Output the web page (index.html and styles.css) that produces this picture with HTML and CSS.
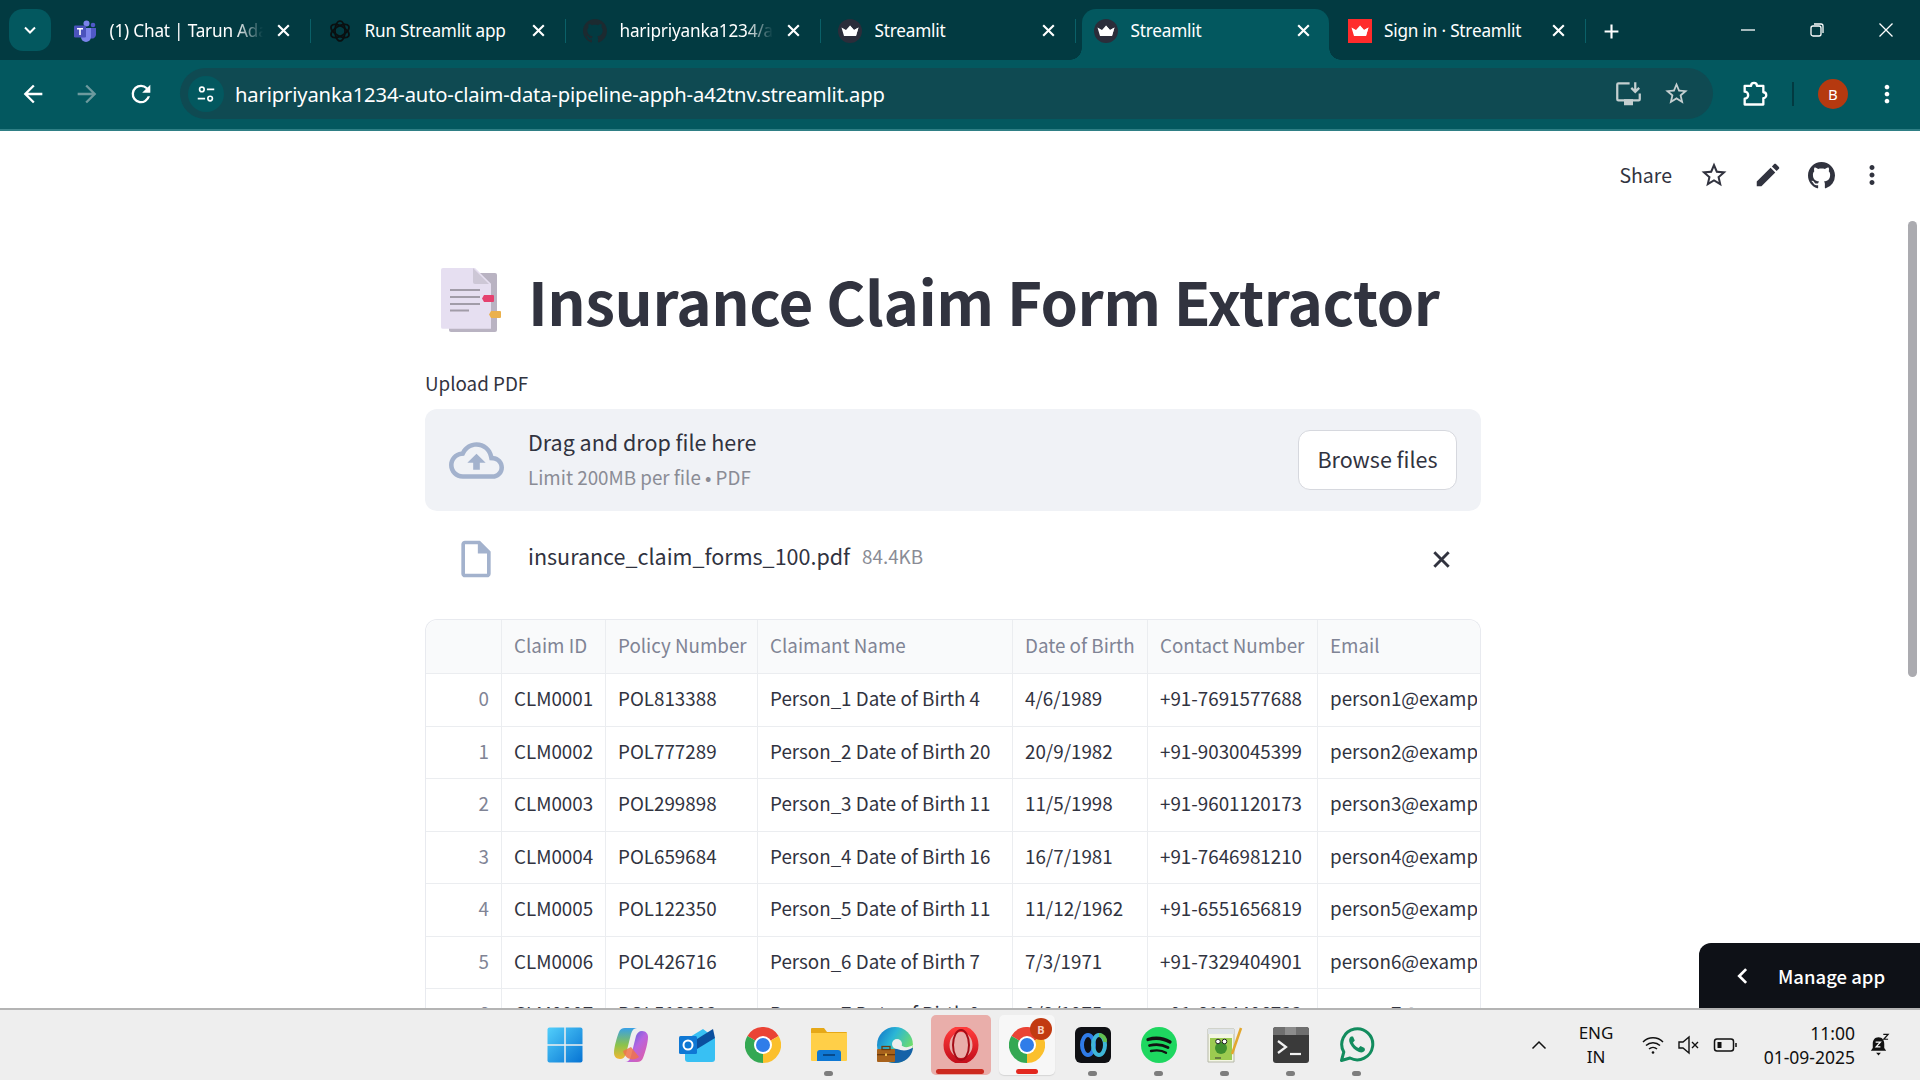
FILE: index.html
```html
<!DOCTYPE html>
<html lang="en">
<head>
    <meta charset="UTF-8">
    <title>Streamlit</title>
    <link rel="stylesheet" href="styles.css">
</head>
<body>
    <svg class="defs" width="0" height="0">
        <symbol id="crown" viewBox="0 0 24 24">
            <path d="M3.500 8.500L8 11l4-4.500 4 4.500 4.500-2.500L18 17H6z" fill="#fff"/>
            <path d="M12 6.500l4 4.500 4.500-2.500L18 17h-6z" fill="#fff" opacity=".8"/>
        </symbol>
        <symbol id="x-mark" viewBox="0 0 16 16">
            <path d="M3 3l10 10M13 3L3 13" fill="none" stroke="currentColor" stroke-width="2"/>
        </symbol>
        <symbol id="chrome-logo" viewBox="0 0 36 36">
            <path d="M18 18L2.400 9A18 18 0 0 1 33.600 9z" fill="#ea4335"/>
            <path d="M18 18L33.600 9A18 18 0 0 1 18 36z" fill="#fbc02d"/>
            <path d="M18 18L18 36A18 18 0 0 1 2.400 9z" fill="#34a853"/>
            <circle cx="18" cy="18" r="9" fill="#fff"/>
            <circle cx="18" cy="18" r="7" fill="#2f7de9"/>
        </symbol>
        <symbol id="dots" viewBox="0 0 24 24">
            <path d="M12 8c1.100 0 2-.9 2-2s-.9-2-2-2-2 .9-2 2 .9 2 2 2zm0 2c-1.100 0-2 .9-2 2s.9 2 2 2 2-.9 2-2-.9-2-2-2zm0 6c-1.100 0-2 .9-2 2s.9 2 2 2 2-.9 2-2-.9-2-2-2z"/>
        </symbol>
        <symbol id="star-line" viewBox="0 0 24 24">
            <path d="M22 9.240l-7.190-.62L12 2 9.190 8.630 2 9.240l5.460 4.730L5.820 21 12 17.270 18.180 21l-1.630-7.030L22 9.240zM12 15.400l-3.760 2.270 1-4.280-3.320-2.880 4.380-.38L12 6.100l1.710 4.040 4.380.38-3.320 2.880 1 4.280L12 15.400z"/>
        </symbol>
        <symbol id="octocat" viewBox="0 0 16 16">
            <path d="M8 0C3.580 0 0 3.580 0 8c0 3.540 2.290 6.530 5.470 7.590.4.07.55-.17.55-.38 0-.19-.01-.82-.01-1.490-2.010.37-2.530-.49-2.690-.94-.09-.23-.48-.94-.82-1.130-.28-.15-.68-.52-.01-.53.63-.01 1.080.58 1.230.82.72 1.210 1.870.87 2.330.66.07-.52.28-.87.51-1.070-1.780-.2-3.640-.89-3.640-3.950 0-.87.31-1.590.82-2.150-.08-.2-.36-1.020.08-2.120 0 0 .67-.21 2.200.82.64-.18 1.320-.27 2-.27.68 0 1.360.09 2 .27 1.530-1.040 2.200-.82 2.200-.82.44 1.100.16 1.920.08 2.120.51.56.82 1.270.82 2.150 0 3.070-1.870 3.750-3.650 3.950.29.25.54.73.54 1.480 0 1.070-.01 1.930-.01 2.200 0 .21.15.46.55.38A8.013 8.013 0 0016 8c0-4.420-3.580-8-8-8z"/>
        </symbol>
    </svg>

    <div class="tab-strip">
        <button class="tab-search">
            <svg width="16" height="16" viewBox="0 0 16 16"><path d="M3 5.500l5 5 5-5" fill="none" stroke="#fff" stroke-width="2"/></svg>
        </button>
        <div class="tab">
            <svg class="favicon" viewBox="0 0 24 24">
                <circle cx="13.500" cy="4.500" r="3" fill="#7b83eb"/>
                <circle cx="20" cy="6" r="2.300" fill="#5059c9"/>
                <path d="M17 9h6v7a4 4 0 0 1-6 3z" fill="#5059c9"/>
                <path d="M8 9h10v9a5 5 0 0 1-10 0z" fill="#7b83eb"/>
                <rect x="1" y="6.500" width="12" height="12" rx="1.300" fill="#4b53bc"/>
                <path d="M4 9h6v1.500H7.800V16H6.200v-5.500H4z" fill="#fff"/>
            </svg>
            <span class="tab-title fade">(1) Chat | Tarun Adani</span>
            <svg class="tab-close"><use href="#x-mark"/></svg>
        </div>
        <div class="tab">
            <svg class="favicon" viewBox="0 0 24 24" fill="none" stroke="#0a0f10" stroke-width="1.700">
                <ellipse cx="12" cy="12" rx="5" ry="10"/>
                <ellipse cx="12" cy="12" rx="5" ry="10" transform="rotate(60 12 12)"/>
                <ellipse cx="12" cy="12" rx="5" ry="10" transform="rotate(120 12 12)"/>
            </svg>
            <span class="tab-title">Run Streamlit app</span>
            <svg class="tab-close"><use href="#x-mark"/></svg>
        </div>
        <div class="tab">
            <svg class="favicon favicon-dim"><use href="#octocat"/></svg>
            <span class="tab-title fade">haripriyanka1234/auto-claim</span>
            <svg class="tab-close"><use href="#x-mark"/></svg>
        </div>
        <div class="tab">
            <span class="favicon-round"><svg class="crown"><use href="#crown"/></svg></span>
            <span class="tab-title">Streamlit</span>
            <svg class="tab-close"><use href="#x-mark"/></svg>
        </div>
        <div class="tab tab-active">
            <span class="favicon-round"><svg class="crown"><use href="#crown"/></svg></span>
            <span class="tab-title">Streamlit</span>
            <svg class="tab-close"><use href="#x-mark"/></svg>
        </div>
        <div class="tab tab-last">
            <span class="favicon-red"><svg class="crown"><use href="#crown"/></svg></span>
            <span class="tab-title">Sign in · Streamlit</span>
            <svg class="tab-close"><use href="#x-mark"/></svg>
        </div>
        <svg class="new-tab" viewBox="0 0 16 16"><path d="M8 1.500v13M1.500 8h13" stroke="#fff" stroke-width="2"/></svg>
        <div class="window-controls">
            <svg viewBox="0 0 16 16"><path d="M1 8h14" stroke="#fff" stroke-width="1.300"/></svg>
            <svg viewBox="0 0 16 16" fill="none" stroke="#fff" stroke-width="1.300"><rect x="2" y="4" width="10" height="10" rx="2"/><path d="M5 2h7a2 2 0 0 1 2 2v7"/></svg>
            <svg viewBox="0 0 16 16"><path d="M1.500 1.500l13 13M14.500 1.500l-13 13" stroke="#fff" stroke-width="1.300"/></svg>
        </div>
    </div>

    <div class="toolbar">
        <button class="nav-btn">
            <svg viewBox="0 0 24 24"><path d="M20 11H7.830l5.590-5.590L12 4l-8 8 8 8 1.410-1.410L7.830 13H20z" fill="#fff"/></svg>
        </button>
        <button class="nav-btn">
            <svg viewBox="0 0 24 24"><path d="M4 11h12.170l-5.590-5.590L12 4l8 8-8 8-1.410-1.410L16.170 13H4z" fill="#6d9a9e"/></svg>
        </button>
        <button class="nav-btn">
            <svg viewBox="0 0 24 24"><path d="M17.650 6.350A7.950 7.950 0 0 0 12 4a8 8 0 1 0 7.730 10h-2.080A6 6 0 1 1 12 6c1.660 0 3.140.69 4.220 1.780L13 11h7V4z" fill="#fff"/></svg>
        </button>
        <div class="omnibox">
            <span class="site-info">
                <svg viewBox="0 0 24 24" fill="none" stroke="#fff" stroke-width="1.800"><circle cx="7.500" cy="7" r="2.500"/><path d="M13 7h8M3 17h8"/><circle cx="16.500" cy="17" r="2.500"/></svg>
            </span>
            <span class="url">haripriyanka1234-auto-claim-data-pipeline-apph-a42tnv.streamlit.app</span>
            <svg class="omni-icon" viewBox="0 0 24 24" fill="none" stroke="#c4cfd0" stroke-width="2"><path d="M13 3H3a1 1 0 0 0-1 1v13a1 1 0 0 0 1 1h18a1 1 0 0 0 1-1v-5M8 21.500h8M18 2v8M14.500 7l3.500 3.500L21.500 7"/><path d="M9 18h6v3H9z" fill="#c4cfd0"/></svg>
            <svg class="omni-icon omni-star"><use href="#star-line"/></svg>
        </div>
        <svg class="ext-icon" viewBox="0 0 24 24" fill="none" stroke="#fff" stroke-width="2" stroke-linejoin="round"><path d="M4 5h5.500a2.500 2.500 0 0 1 5 0H20v5.500a2.500 2.500 0 0 1 0 5V21H4v-5a3 3 0 0 0 0-6z"/></svg>
        <span class="toolbar-sep"></span>
        <span class="avatar">B</span>
        <svg class="toolbar-dots"><use href="#dots"/></svg>
    </div>

    <div class="page">
        <div class="app-actions">
            <span class="share">Share</span>
            <svg class="action-icon"><use href="#star-line"/></svg>
            <svg class="action-icon" viewBox="0 0 24 24"><path d="M3 17.250V21h3.750L17.810 9.940l-3.750-3.750L3 17.250zM20.710 7.040c.39-.39.39-1.020 0-1.410l-2.340-2.340c-.39-.39-1.020-.39-1.410 0l-1.830 1.830 3.750 3.750 1.830-1.830z"/></svg>
            <svg class="action-icon action-github"><use href="#octocat"/></svg>
            <svg class="action-icon action-dots"><use href="#dots"/></svg>
        </div>

        <div class="main">
            <h1 class="title">
                <svg class="title-emoji" viewBox="0 0 60 64">
                    <rect x="8" y="5" width="48" height="59" rx="2" fill="#b9b3c2"/>
                    <path d="M2 0h32l16 17v49H2a2 2 0 0 1-2-2V2a2 2 0 0 1 2-2z" transform="scale(1 .92)" fill="#e6dff1"/>
                    <path d="M32 0l16 16H34a2 2 0 0 1-2-2z" fill="#cdc7d6"/>
                    <path d="M9 22h30M9 29h30M9 36h30M9 42.500h19" stroke="#a19ca8" stroke-width="2.200"/>
                    <path d="M43 27h9a1 1 0 0 1 1 1v5a1 1 0 0 1-1 1h-9l-2-3.500z" fill="#e5416f"/>
                    <path d="M50 43h9a1 1 0 0 1 1 1v5a1 1 0 0 1-1 1h-9l-2-3.500z" fill="#ebb14c"/>
                </svg>
                <span>Insurance Claim Form Extractor</span>
            </h1>

            <div class="upload-label">Upload PDF</div>
            <div class="dropzone">
                <svg class="cloud" viewBox="0 0 24 24"><path d="M19.350 10.040C18.670 6.590 15.640 4 12 4 9.110 4 6.600 5.640 5.350 8.040 2.340 8.360 0 10.910 0 14c0 3.310 2.690 6 6 6h13c2.760 0 5-2.240 5-5 0-2.640-2.050-4.780-4.650-4.960zM19 18H6c-2.210 0-4-1.790-4-4 0-2.050 1.530-3.760 3.560-3.970l1.070-.11.5-.95C8.080 7.140 9.940 6 12 6c2.620 0 4.880 1.860 5.390 4.430l.3 1.500 1.530.11c1.560.1 2.780 1.410 2.780 2.960 0 1.650-1.350 3-3 3zM8 13h2.550v3h2.900v-3H16l-4-4z"/></svg>
                <div class="drop-text">
                    <div class="drop-title">Drag and drop file here</div>
                    <div class="drop-hint">Limit 200MB per file • PDF</div>
                </div>
                <button class="browse-btn">Browse files</button>
            </div>

            <div class="file-row">
                <svg class="file-icon" viewBox="0 0 24 24"><path d="M14 2H6c-1.100 0-1.990.9-1.990 2L4 20c0 1.100.89 2 1.990 2H18c1.100 0 2-.9 2-2V8l-6-6zM6 20V4h7v5h5v11H6z"/><path d="M14 2v6h6z"/></svg>
                <span class="file-name">insurance_claim_forms_100.pdf</span>
                <span class="file-size">84.4KB</span>
                <svg class="file-remove"><use href="#x-mark"/></svg>
            </div>

            <table class="grid">
                <colgroup>
                    <col class="col-index"><col class="col-claim"><col class="col-policy"><col class="col-name"><col class="col-dob"><col class="col-phone"><col class="col-email">
                </colgroup>
                <thead>
                    <tr><th></th><th>Claim ID</th><th>Policy Number</th><th>Claimant Name</th><th>Date of Birth</th><th>Contact Number</th><th>Email</th></tr>
                </thead>
                <tbody>
                    <tr><td class="idx">0</td><td>CLM0001</td><td>POL813388</td><td>Person_1 Date of Birth 4</td><td>4/6/1989</td><td>+91-7691577688</td><td><span class="cell-clip">person1@example.com</span></td></tr>
                    <tr><td class="idx">1</td><td>CLM0002</td><td>POL777289</td><td>Person_2 Date of Birth 20</td><td>20/9/1982</td><td>+91-9030045399</td><td><span class="cell-clip">person2@example.com</span></td></tr>
                    <tr><td class="idx">2</td><td>CLM0003</td><td>POL299898</td><td>Person_3 Date of Birth 11</td><td>11/5/1998</td><td>+91-9601120173</td><td><span class="cell-clip">person3@example.com</span></td></tr>
                    <tr><td class="idx">3</td><td>CLM0004</td><td>POL659684</td><td>Person_4 Date of Birth 16</td><td>16/7/1981</td><td>+91-7646981210</td><td><span class="cell-clip">person4@example.com</span></td></tr>
                    <tr><td class="idx">4</td><td>CLM0005</td><td>POL122350</td><td>Person_5 Date of Birth 11</td><td>11/12/1962</td><td>+91-6551656819</td><td><span class="cell-clip">person5@example.com</span></td></tr>
                    <tr><td class="idx">5</td><td>CLM0006</td><td>POL426716</td><td>Person_6 Date of Birth 7</td><td>7/3/1971</td><td>+91-7329404901</td><td><span class="cell-clip">person6@example.com</span></td></tr>
                    <tr><td class="idx">6</td><td>CLM0007</td><td>POL518203</td><td>Person_7 Date of Birth 9</td><td>9/8/1975</td><td>+91-8124406732</td><td><span class="cell-clip">person7@example.com</span></td></tr>
                </tbody>
            </table>
        </div>

        <div class="scroll-thumb"></div>
        <div class="manage-app">
            <svg viewBox="0 0 16 16"><path d="M10.500 2.500L5 8l5.500 5.500" fill="none" stroke="#fff" stroke-width="2.200"/></svg>
            <span>Manage app</span>
        </div>
    </div>

    <div class="taskbar">
        <div class="task-slot">
            <svg viewBox="0 0 36 36">
                <defs><linearGradient id="win" x1="0" y1="0" x2="1" y2="1"><stop offset="0" stop-color="#52cffb"/><stop offset="1" stop-color="#0673d3"/></linearGradient></defs>
                <rect x="0.500" y="0.500" width="35" height="35" rx="2" fill="url(#win)"/>
                <path d="M18 0v36M0 18h36" stroke="#eee" stroke-width="1.500"/>
            </svg>
        </div>
        <div class="task-slot">
            <svg viewBox="0 0 36 36">
                <defs>
                    <linearGradient id="cop-a" x1="0" y1="0" x2="0" y2="1"><stop offset="0" stop-color="#38a0e8"/><stop offset=".55" stop-color="#8bc34a"/><stop offset="1" stop-color="#f2b632"/></linearGradient>
                    <linearGradient id="cop-b" x1="0" y1="0" x2="1" y2="1"><stop offset="0" stop-color="#2b5fd9"/><stop offset=".5" stop-color="#b765e0"/><stop offset="1" stop-color="#e85a9a"/></linearGradient>
                </defs>
                <path d="M12 1h12c-3 0-5 2-6 6l-5 20c-1 3-3 5-6 5-4 0-6-3-6-6 0-6 3-16 5-21 1-2.500 3-4 6-4z" fill="url(#cop-a)"/>
                <path d="M24 35H12c3 0 5-2 6-6l5-20c1-3 3-5 6-5 4 0 6 3 6 6 0 6-3 16-5 21-1 2.500-3 4-6 4z" fill="url(#cop-b)"/>
                <path d="M10 24c2 8 10 11 16 6l-8-10z" fill="#f0734a" opacity=".85"/>
            </svg>
        </div>
        <div class="task-slot">
            <svg viewBox="0 0 36 36">
                <path d="M6 13L24 2l12 9v21a3 3 0 0 1-3 3H9a3 3 0 0 1-3-3z" fill="#38c0f3"/>
                <path d="M18 12L34 2l2 9-18 11z" fill="#0b4f9e"/>
                <rect y="9" width="18" height="18" rx="1.500" fill="#0f78d4"/>
                <circle cx="9" cy="18" r="4.500" fill="none" stroke="#fff" stroke-width="2"/>
            </svg>
        </div>
        <div class="task-slot"><svg><use href="#chrome-logo"/></svg></div>
        <div class="task-slot task-open">
            <svg viewBox="0 0 36 36">
                <path d="M0 2a1 1 0 0 1 1-1h12l3 4h19a1 1 0 0 1 1 1v6H0z" fill="#e6a817"/>
                <path d="M0 6h36v27a1 1 0 0 1-1 1H1a1 1 0 0 1-1-1z" fill="#ffcf48"/>
                <path d="M6 34V26a3 3 0 0 1 3-3h18a3 3 0 0 1 3 3v8z" fill="#0f78d4"/>
                <path d="M12 28h12" stroke="#063b73" stroke-width="1.500"/>
            </svg>
        </div>
        <div class="task-slot">
            <svg viewBox="0 0 36 36">
                <defs><linearGradient id="edge" x1="0" y1="0" x2="1" y2=".6"><stop offset="0" stop-color="#0f6fc6"/><stop offset=".45" stop-color="#2bb6d6"/><stop offset="1" stop-color="#78e25c"/></linearGradient></defs>
                <circle cx="18" cy="18" r="18" fill="url(#edge)"/>
                <path d="M18 36c-4 0-8-1-11-3l7-11h6l16-1c-1 9-9 15-18 15z" fill="#1562a8"/>
                <circle cx="20" cy="17" r="5" fill="#eee"/>
                <path d="M20 22c5 2 11 2 15-1l1-3c-5 3-10 3-13-1z" fill="#eee"/>
                <rect y="22" width="18" height="13" rx="1" fill="#a8621c"/>
                <rect y="27" width="18" height="1.300" fill="#6e3a0b"/>
                <rect x="5" y="19.500" width="8" height="3" fill="none" stroke="#6e3a0b" stroke-width="1.300"/>
                <rect x="8" y="26.500" width="2" height="2.500" fill="#f2c14a"/>
            </svg>
        </div>
        <div class="task-slot task-opera">
            <svg viewBox="0 0 36 36">
                <defs><linearGradient id="opera" x1="0" y1="0" x2="0" y2="1"><stop offset="0" stop-color="#ff3b3b"/><stop offset="1" stop-color="#c5101c"/></linearGradient></defs>
                <ellipse cx="18" cy="18" rx="14.500" ry="16" fill="none" stroke="url(#opera)" stroke-width="6"/>
                <ellipse cx="18" cy="18" rx="8" ry="15" fill="none" stroke="#a50d17" stroke-width="2"/>
            </svg>
            <span class="task-bar-red"></span>
        </div>
        <div class="task-slot task-chrome">
            <svg><use href="#chrome-logo"/></svg>
            <span class="task-badge">B</span>
            <span class="task-bar-red task-bar-short"></span>
        </div>
        <div class="task-slot task-open">
            <svg viewBox="0 0 36 36" fill="none">
                <rect width="36" height="36" rx="6" fill="#0f1014"/>
                <ellipse cx="13" cy="18" rx="6" ry="10" stroke="#2f7be8" stroke-width="4"/>
                <ellipse cx="24" cy="18" rx="6" ry="10" stroke="#3fb6d8" stroke-width="4"/>
                <path d="M24 8a6 6 0 0 1 6 7" stroke="#63c04f" stroke-width="4"/>
            </svg>
        </div>
        <div class="task-slot task-open">
            <svg viewBox="0 0 36 36" fill="none" stroke="#121212" stroke-linecap="round">
                <circle cx="18" cy="18" r="18" fill="#1ed760" stroke="none"/>
                <path d="M7 12.500c7-2 15-1.500 22 2.500" stroke-width="3.300"/>
                <path d="M8.500 18.500c6-1.500 13-1 18.500 2" stroke-width="2.800"/>
                <path d="M10 24c5-1 11-.8 15 1.800" stroke-width="2.300"/>
            </svg>
        </div>
        <div class="task-slot task-open">
            <svg viewBox="0 0 36 36">
                <path d="M1 2h26v33H1z" fill="#f4f6e4" stroke="#b5b8a8"/>
                <path d="M1 2h26v5H1z" fill="#dfe3e6"/>
                <path d="M3 11h22v22H3z" fill="#9ccb50"/>
                <circle cx="14" cy="21" r="6" fill="#3f8f2e"/>
                <circle cx="11" cy="14.500" r="2.300" fill="#fff" stroke="#222"/>
                <circle cx="17.500" cy="14.500" r="2.300" fill="#fff" stroke="#222"/>
                <path d="M34 1L25 27" stroke="#e2a72e" stroke-width="2.500"/>
                <path d="M8 31h6" stroke="#333"/>
            </svg>
        </div>
        <div class="task-slot task-open">
            <svg viewBox="0 0 36 36" fill="none">
                <rect width="36" height="36" rx="3" fill="#3a3a3a"/>
                <path d="M0 3a3 3 0 0 1 3-3h30a3 3 0 0 1 3 3v5H0z" fill="#6f6f6f"/>
                <path d="M12 0h11v8H12z" fill="#8c8c8c"/>
                <path d="M5 14l8 6-8 6" stroke="#f2f2f2" stroke-width="2.200"/>
                <path d="M17 27h11" stroke="#f2f2f2" stroke-width="2.200"/>
            </svg>
        </div>
        <div class="task-slot task-open">
            <svg viewBox="0 0 36 36" fill="none">
                <path d="M2.500 33.500l2.300-8.500A15.500 15.500 0 1 1 11 31z" stroke="#128c5e" stroke-width="3" stroke-linejoin="round"/>
                <path d="M12 9.500c-2 1.500-2.500 4-1 7 2 4 5 7 9 8.500 3 1 5 0 6-2l-.5-2-4-2-2 2c-2.500-1-4.500-3-5.500-5.500l1.800-2-1.800-4z" fill="#128c5e"/>
            </svg>
        </div>

        <div class="tray">
            <svg class="tray-chevron" viewBox="0 0 16 16"><path d="M1.500 11.500L8 5l6.500 6.500" fill="none" stroke="#111" stroke-width="1.500"/></svg>
            <div class="tray-lang"><span>ENG</span><span>IN</span></div>
            <svg class="tray-icon" viewBox="0 0 24 24" fill="none" stroke="#111" stroke-width="1.500">
                <path d="M2 9a14 14 0 0 1 20 0M5 12.500a10 10 0 0 1 14 0M8 16a6 6 0 0 1 8 0"/>
                <circle cx="12" cy="19.500" r="1.300" fill="#111" stroke="none"/>
            </svg>
            <svg class="tray-icon" viewBox="0 0 24 24" fill="none" stroke="#111" stroke-width="1.400">
                <path d="M2 9v6h4l6 5V4L6 9zM15 9l6 6M21 9l-6 6"/>
            </svg>
            <svg class="tray-icon" viewBox="0 0 24 24" fill="none" stroke="#111" stroke-width="1.500">
                <rect x="1.500" y="6" width="19" height="12" rx="2.500"/>
                <rect x="4.500" y="9" width="4" height="6" fill="#111" stroke="none"/>
                <path d="M23 10v4"/>
            </svg>
            <div class="tray-clock"><span>11:00</span><span>01-09-2025</span></div>
            <svg class="tray-bell" viewBox="0 0 24 24">
                <path d="M12 4c-4 0-6 3-6 7v4l-2 3h16l-2-3v-4c0-4-2-7-6-7zM9.500 20h5L12 23z" fill="#111"/>
                <path d="M9 9h5l-4.500 5H14" fill="none" stroke="#fff" stroke-width="1.300"/>
                <path d="M17 1h5l-4.500 5H22" fill="none" stroke="#111" stroke-width="1.300"/>
            </svg>
        </div>
    </div>
</body>
</html>
```

FILE: styles.css
```css
* {
    box-sizing: border-box;
}

html,
body {
    margin: 0;
    height: 100%;
}

body {
    display: flex;
    flex-direction: column;
    height: 1080px;
    overflow: hidden;
    background-color: white;
    font-family: "Noto Sans", sans-serif;
}

button {
    border: none;
    background: none;
    padding: 0;
    font: inherit;
}

.defs {
    position: absolute;
}

/* browser tabs */
.tab-strip {
    display: flex;
    align-items: flex-end;
    height: 60px;
    padding-left: 9px;
    background-color: #023a41;
    color: white;
}

.tab-search {
    display: flex;
    align-items: center;
    justify-content: center;
    align-self: flex-start;
    width: 42px;
    height: 42px;
    margin-top: 9px;
    margin-right: 5px;
    border-radius: 14px;
    background-color: #03585f;
}

.tab {
    position: relative;
    display: flex;
    align-items: center;
    width: 255px;
    height: 51px;
    padding: 0 19px 8px 17px;
    flex-shrink: 0;
}

.tab::after {
    content: "";
    position: absolute;
    right: 0;
    top: 10px;
    height: 24px;
    width: 1.500px;
    background-color: #0a6068;
}

.tab-active {
    margin-left: 6px;
    width: 247px;
    padding-left: 12px;
    padding-right: 17px;
    border-radius: 14px 14px 0 0;
    background-color: #03585f;
}

/* the flared foot on both sides of the open tab */
.tab-active::before,
.tab-active::after {
    content: "";
    position: absolute;
    top: auto;
    bottom: 0;
    width: 12px;
    height: 12px;
}

.tab-active::before {
    left: -12px;
    background: radial-gradient(circle at 0 0, transparent 11.500px, #03585f 12px);
}

.tab-active::after {
    right: -12px;
    background: radial-gradient(circle at 100% 0, transparent 11.500px, #03585f 12px);
}

.tab-last {
    width: 257px;
    padding-left: 19px;
}

.tab-last .tab-title {
    margin-left: 12px;
}

.favicon {
    width: 24px;
    height: 24px;
    flex-shrink: 0;
}

.favicon-dim {
    fill: #1c2a30;
}

.favicon-round,
.favicon-red {
    display: flex;
    align-items: center;
    justify-content: center;
    width: 24px;
    height: 24px;
    flex-shrink: 0;
    border-radius: 50%;
    background-color: #2b2d3a;
}

.favicon-red {
    border-radius: 0;
    background-color: #ff2b2b;
}

.crown {
    width: 24px;
    height: 24px;
}

.tab-title {
    flex: 1;
    min-width: 0;
    margin-left: 12.500px;
    font-size: 17.200px;
    letter-spacing: -0.200px;
    white-space: nowrap;
    overflow: hidden;
}

.fade {
    -webkit-mask-image: linear-gradient(to right, black 82%, transparent 100%);
    mask-image: linear-gradient(to right, black 82%, transparent 100%);
}

.tab-close {
    width: 17px;
    height: 17px;
    margin-left: 12px;
    flex-shrink: 0;
    color: white;
}

.new-tab {
    width: 17px;
    height: 17px;
    margin-left: 17px;
    margin-bottom: 20px;
}

.window-controls {
    display: flex;
    gap: 53px;
    margin-left: auto;
    margin-right: 26px;
    margin-bottom: 22px;
}

.window-controls svg {
    width: 16px;
    height: 16px;
}

/* address bar */
.toolbar {
    display: flex;
    align-items: center;
    height: 71px;
    padding: 0 0 2px 6px;
    border-bottom: 2px solid #2f7f85;
    background-color: #03585f;
}

.nav-btn {
    display: flex;
    align-items: center;
    justify-content: center;
    width: 54px;
    height: 46px;
}

.nav-btn svg {
    width: 28px;
    height: 28px;
}

.omnibox {
    display: flex;
    align-items: center;
    width: 1533px;
    height: 51px;
    margin-left: 12px;
    padding: 0 23px 0 8px;
    border-radius: 26px;
    background-color: #0f4a52;
}

.site-info {
    display: flex;
    align-items: center;
    justify-content: center;
    width: 36px;
    height: 36px;
    border-radius: 50%;
    background-color: #03585f;
}

.site-info svg {
    width: 22px;
    height: 22px;
}

.url {
    flex: 1;
    margin-left: 11px;
    font-size: 20.200px;
    letter-spacing: -0.150px;
    color: white;
}

.omni-icon {
    width: 27px;
    height: 27px;
    margin-left: 21px;
}

.omni-star {
    fill: #c4cfd0;
}

.ext-icon {
    width: 28px;
    height: 28px;
    margin-left: 27px;
}

.toolbar-sep {
    width: 2px;
    height: 24px;
    margin-left: 24px;
    background-color: #023a41;
}

.avatar {
    display: flex;
    align-items: center;
    justify-content: center;
    width: 30px;
    height: 30px;
    margin-left: 24px;
    border-radius: 50%;
    background-color: #b5390f;
    font-size: 15px;
    color: white;
}

.toolbar-dots {
    width: 28px;
    height: 28px;
    margin-left: 25px;
    fill: white;
}

/* streamlit page */
.page {
    position: relative;
    flex: 1;
    min-height: 0;
    overflow: hidden;
    background-color: white;
    font-family: "Noto Sans CJK JP", "Noto Sans", sans-serif;
    color: #31333f;
}

.app-actions {
    display: flex;
    align-items: center;
    justify-content: flex-end;
    height: 88px;
    padding-right: 33px;
}

.share {
    margin-right: 3px;
    margin-bottom: 2px;
    font-size: 19.500px;
}

.action-icon {
    width: 30px;
    height: 30px;
    margin-left: 24px;
    fill: #31333f;
}

.action-github {
    width: 27px;
    height: 27px;
    margin-left: 25px;
}

.action-dots {
    margin-left: 22px;
}

.main {
    width: 1056px;
    margin-left: 425px;
}

.title {
    display: flex;
    align-items: center;
    gap: 27px;
    height: 128px;
    margin: 17px 0 0;
    padding-left: 16px;
    font-size: 60px;
    font-weight: 700;
    letter-spacing: -0.450px;
    line-height: 1;
    white-space: nowrap;
}

.title-emoji {
    width: 60px;
    height: 64px;
    flex-shrink: 0;
}

.upload-label {
    height: 45px;
    padding-top: 4px;
    font-size: 18.800px;
    line-height: 30px;
}

.dropzone {
    display: flex;
    align-items: center;
    height: 102px;
    padding: 0 24px;
    border-radius: 12px;
    background-color: #f0f2f6;
}

.cloud {
    width: 55px;
    height: 55px;
    fill: #a3b2cd;
}

.drop-text {
    flex: 1;
    margin-left: 24px;
    margin-bottom: 3px;
}

.drop-title {
    font-size: 21.500px;
    line-height: 34px;
}

.drop-hint {
    margin-top: 3px;
    font-size: 18.800px;
    line-height: 30px;
    color: #8a8c95;
}

.browse-btn {
    width: 159px;
    height: 60px;
    padding-bottom: 3px;
    border: 1.500px solid #d6d8de;
    border-radius: 12px;
    background-color: white;
    font-family: inherit;
    font-size: 21.500px;
    color: #31333f;
}

.file-row {
    position: relative;
    display: flex;
    align-items: center;
    height: 96px;
    padding-left: 29px;
}

.file-icon {
    width: 44px;
    height: 44px;
    fill: #a3b2cd;
}

.file-name {
    margin-left: 30px;
    margin-bottom: 8px;
    font-size: 21.500px;
}

.file-size {
    margin-left: 12px;
    margin-bottom: 8px;
    font-size: 18.800px;
    color: #8a8c95;
}

.file-remove {
    position: absolute;
    right: 28px;
    top: 37px;
    width: 23px;
    height: 23px;
    color: #31333f;
}

.grid {
    width: 1056px;
    margin-top: 12px;
    table-layout: fixed;
    border-collapse: separate;
    border-spacing: 0;
    border-top: 1px solid #e8eaef;
    border-left: 1px solid #e8eaef;
    border-right: 1px solid #e8eaef;
    border-radius: 12px 12px 0 0;
    font-size: 18.800px;
    line-height: 24px;
}

.col-index { width: 76px; }
.col-claim { width: 104px; }
.col-policy { width: 152px; }
.col-name { width: 255px; }
.col-dob { width: 135px; }
.col-phone { width: 170px; }

.grid th,
.grid td {
    padding: 0 0 3px 12px;
    overflow: hidden;
    white-space: nowrap;
    border-right: 1px solid #ebedf0;
    border-bottom: 1.500px solid #ebedf0;
    text-align: left;
}

.grid th:last-child,
.grid td:last-child {
    border-right: none;
}

.grid th {
    height: 54px;
    background-color: #f9fafb;
    font-weight: 400;
    color: #808495;
}

.grid th:first-child {
    border-top-left-radius: 12px;
}

.grid th:last-child {
    border-top-right-radius: 12px;
}

.grid td {
    height: 52.500px;
}

.grid .idx {
    padding: 0 12px 3px 0;
    text-align: right;
    color: #808495;
}

.cell-clip {
    display: block;
    width: 147px;
    overflow: hidden;
}

.scroll-thumb {
    position: absolute;
    right: 3px;
    top: 90px;
    width: 9px;
    height: 456px;
    border-radius: 5px;
    background-color: #ababb0;
}

.manage-app {
    position: absolute;
    right: 0;
    bottom: 0;
    display: flex;
    align-items: center;
    width: 221px;
    height: 65px;
    padding-left: 34px;
    border-top-left-radius: 12px;
    background-color: #0e1117;
    color: white;
    font-size: 18.500px;
    font-weight: 500;
}

.manage-app svg {
    width: 20px;
    height: 20px;
    margin-right: 25px;
}

/* windows taskbar */
.taskbar {
    display: flex;
    align-items: center;
    flex-shrink: 0;
    height: 72px;
    padding-left: 532px;
    border-top: 2px solid #b4b4b4;
    background-color: #eeeeee;
    font-family: "Noto Sans", sans-serif;
    color: #111;
}

.task-slot {
    position: relative;
    display: flex;
    align-items: center;
    justify-content: center;
    width: 66px;
    height: 60px;
    flex-shrink: 0;
}

.task-slot svg {
    width: 36px;
    height: 36px;
}

.task-open::after {
    content: "";
    position: absolute;
    left: 28px;
    bottom: -1px;
    width: 9px;
    height: 5px;
    border-radius: 3px;
    background-color: #7d7d7d;
}

.task-opera {
    width: 60px;
    margin: 0 3px;
    border-radius: 5px;
    background-color: #e9aeaa;
}

.task-chrome {
    width: 56px;
    margin: 0 5px;
    border-radius: 5px;
    background-color: #f7f7f7;
    box-shadow: 0 1px 1px #d5d5d5;
}

.task-bar-red {
    position: absolute;
    left: 5px;
    bottom: 1px;
    width: 48px;
    height: 5px;
    border-radius: 3px;
    background-color: #cc2a1f;
}

.task-bar-short {
    left: 17px;
    width: 22px;
    background-color: #e3281f;
}

.task-badge {
    position: absolute;
    top: 3px;
    right: 3px;
    display: flex;
    align-items: center;
    justify-content: center;
    width: 22px;
    height: 22px;
    border-radius: 50%;
    background-color: #c23a11;
    color: #f6d0c2;
    font-size: 11px;
    font-weight: 700;
}

.tray {
    display: flex;
    align-items: center;
    margin-left: 141px;
}

.tray-chevron {
    width: 16px;
    height: 16px;
}

.tray-lang {
    display: flex;
    flex-direction: column;
    align-items: center;
    width: 40px;
    margin-left: 29px;
    font-size: 17px;
    line-height: 24px;
}

.tray-icon {
    width: 24px;
    height: 24px;
    margin-left: 12px;
}

.tray-lang + .tray-icon {
    margin-left: 25px;
}

.tray-clock {
    display: flex;
    flex-direction: column;
    align-items: flex-end;
    width: 118px;
    font-size: 17.500px;
    line-height: 24px;
}

.tray-bell {
    width: 23px;
    height: 24px;
    margin-left: 12px;
}
```
